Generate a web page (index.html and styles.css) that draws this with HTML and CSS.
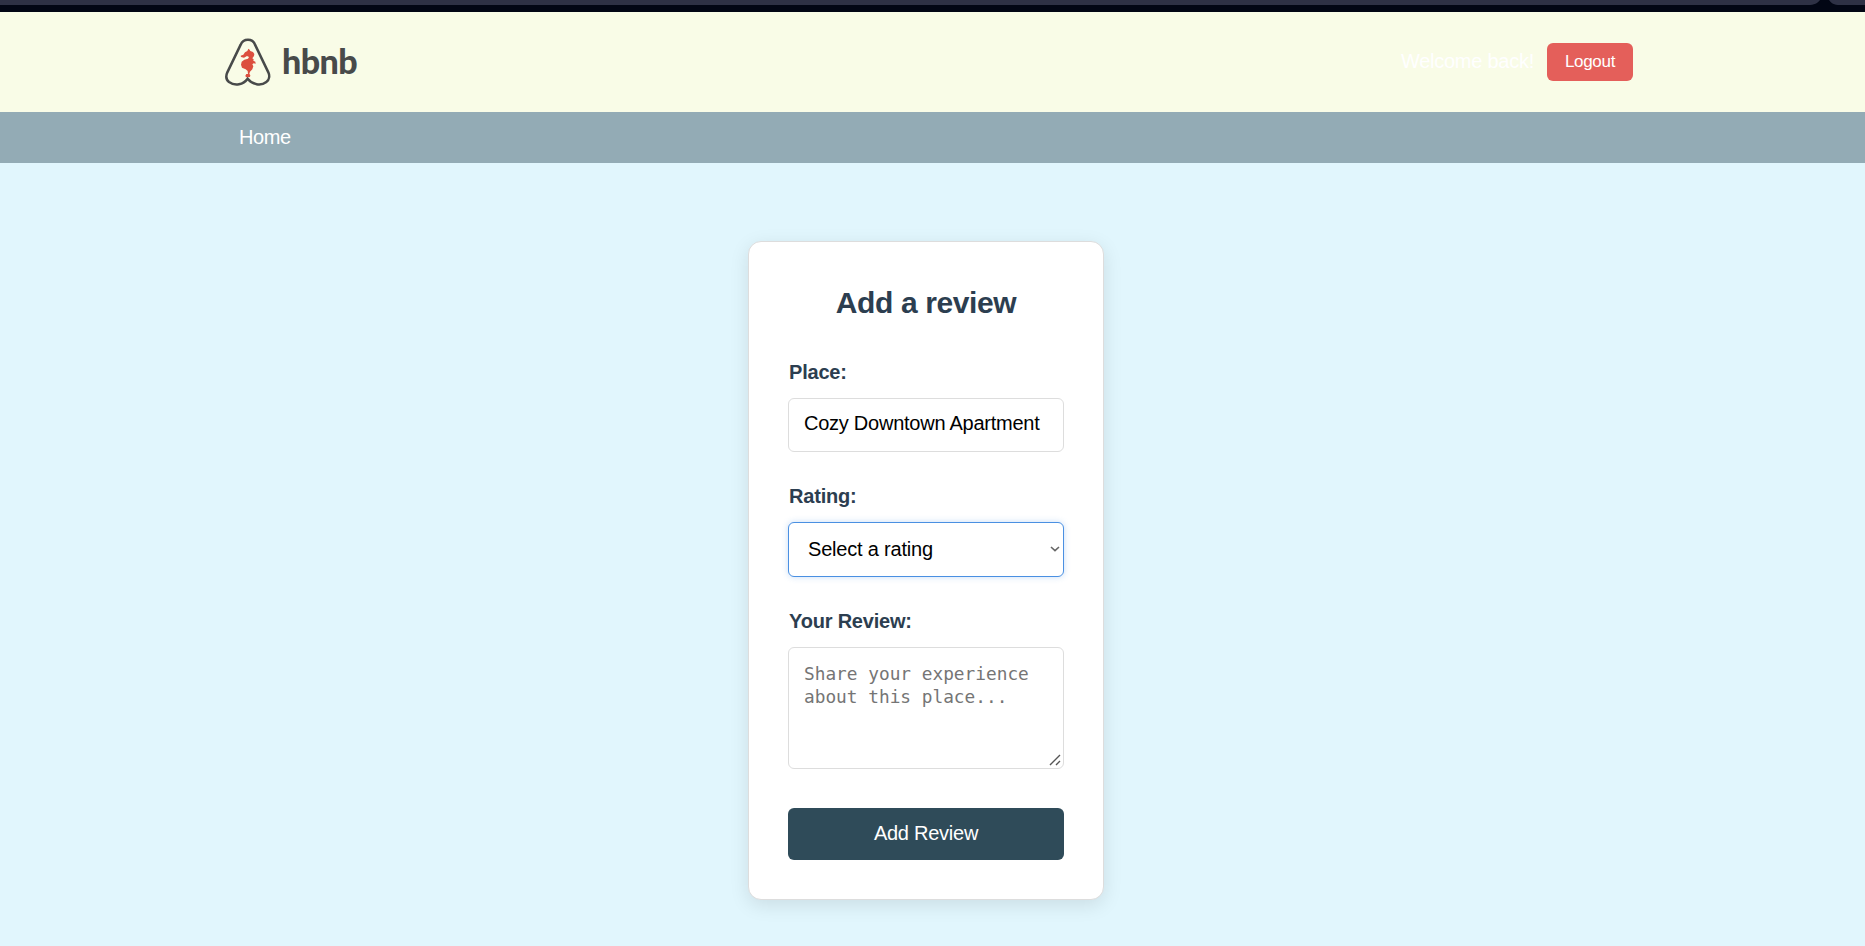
FILE: index.html
```html
<!DOCTYPE html>
<html lang="en">
<head>
<meta charset="utf-8">
<title>hbnb - Add a review</title>
<link rel="stylesheet" href="styles.css">
</head>
<body>
<div class="chrome"><svg width="1865" height="12" viewBox="0 0 1865 12"><path d="M0 0H1820C1818 3 1814 5 1808 5H0ZM1829 0H1865V5H1840C1834 5 1831 3 1829 0Z" fill="#2e3145"/></svg></div>
<header class="header">
  <a class="logo">
    <svg class="logo-mark" viewBox="0 0 180 168">
      <path d="M83 134C70 152 45 157 27 144C17 136 18 124 22 115L62 32C70 12 98 12 105 32L145 115C149 124 149 137 139 144C122 157 97 152 83 134Z" fill="none" stroke="#484a4a" stroke-width="7.5"/>
      <path d="M85 44L89 47L91 51L99 54L103 60L102 66L97 73L101 76L100 80L106 83L107 89L101 88L97 91L100 97L97 106L90 113L88 119L91 124L90 129L78 130L76 125L79 120L84 120L83 111L77 106L66 101L63 92L65 83L73 77L84 74L87 69L81 66L72 71L63 69L62 65L70 62L75 55L82 51Z" fill="#dc4f3e"/>
    </svg>
    <span class="logo-text">hbnb</span>
  </a>
  <div class="account"><span class="welcome">Welcome back!</span><button class="logout">Logout</button></div>
</header>
<nav class="nav"><a class="nav-link">Home</a></nav>
<main class="main">
  <form class="card">
    <h1 class="title">Add a review</h1>
    <label class="label">Place:</label>
    <div class="field"><span class="place-text">Cozy Downtown Apartment</span></div>
    <label class="label">Rating:</label>
    <div class="field field-select"><span class="rating-text">Select a rating</span><svg class="chevron" width="10" height="6" viewBox="0 0 10 6"><path d="M1 1L5 4.6L9 1" fill="none" stroke="#666" stroke-width="1.6"/></svg></div>
    <label class="label">Your Review:</label>
    <div class="field field-area"><span>Share your experience<br>about this place...</span><svg class="grip" width="12" height="12" viewBox="0 0 12 12"><path d="M1 11L11 1M7 11L11 7" fill="none" stroke="#555" stroke-width="1.4"/></svg></div>
    <button type="button" class="submit">Add Review</button>
  </form>
</main>
</body>
</html>
```
FILE: styles.css
```css
* { box-sizing: border-box; }
body { margin: 0; height: 946px; overflow: hidden; background: #e1f6fd; font: 20px/30px "Liberation Sans", Arial, sans-serif; color: #2c3e50; }
.chrome { height: 12px; background: #020614; }
.chrome svg { display: block; }
.header { height: 100px; background: #f9fce7; display: flex; justify-content: space-between; padding: 0 232px 0 220px; }
.logo { display: flex; }
.logo-mark { width: 60px; height: 56px; margin-top: 22px; }
.logo-text { font: 900 34px/40px Lato, sans-serif; letter-spacing: -0.6px; color: #484a4a; margin: 29px 0 0 2px; }
.account { display: flex; align-items: center; gap: 13px; color: #fff; }
.welcome { letter-spacing: -0.25px; padding-bottom: 2px; }
.logout { width: 86px; height: 38px; border: 0; border-radius: 6px; background: #e45f5a; color: #fff; font: 17px/20px "Liberation Sans", Arial, sans-serif; letter-spacing: -0.3px; padding: 0 0 1px; }
.nav { height: 51px; background: #93abb5; padding: 10px 0 0 239px; color: #fff; }
.nav-link { letter-spacing: -0.4px; }
.main { display: flex; justify-content: center; padding: 78px 13px 0 0; }
.card { width: 356px; height: 659px; background: #fff; border: 1px solid #ddd; border-radius: 13px; padding: 39px; box-shadow: 0 5px 19px rgba(0,0,0,.1); display: flex; flex-direction: column; }
.title { margin: 4px 0 36px; font-size: 30px; line-height: 36px; text-align: center; letter-spacing: -0.4px; }
.label { font-weight: 700; line-height: 30px; margin-bottom: 11px; letter-spacing: -0.2px; padding-left: 1px; }
.field { height: 54px; border: 1px solid #ddd; border-radius: 6px; background: #fff; color: #000; padding: 9px 15px; margin-bottom: 29px; white-space: nowrap; display: flex; justify-content: space-between; }
.place-text { letter-spacing: -0.25px; }
.field-select { height: 55px; padding: 11px 3px 0 19px; border-color: #4a90e2; box-shadow: 0 0 6px rgba(74,144,226,.3); letter-spacing: -0.2px; }
.chevron { margin-top: 12px; }
.field-area { height: 122px; padding: 14px 2px 2px 15px; margin-bottom: 39px; font: 17.8px/23px "DejaVu Sans Mono", monospace; color: #757575; }
.grip { align-self: flex-end; }
.submit { height: 52px; border: 0; border-radius: 6px; background: #2f4b59; color: #fff; font: 20px/24px "Liberation Sans", Arial, sans-serif; letter-spacing: -0.25px; padding: 0 0 3px; }
```
